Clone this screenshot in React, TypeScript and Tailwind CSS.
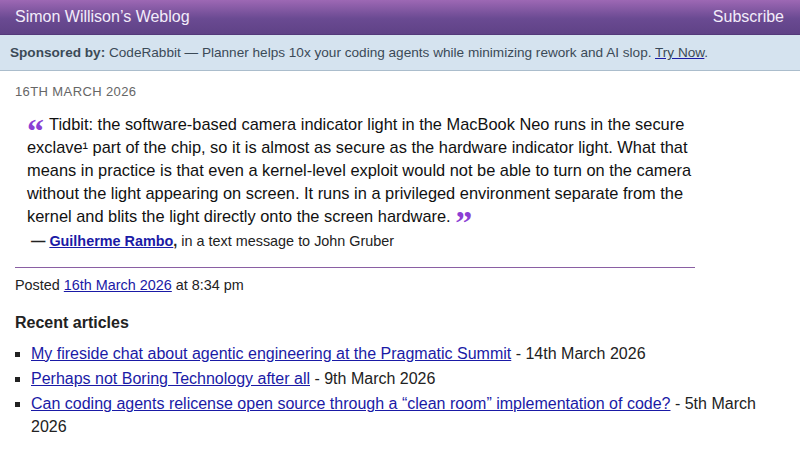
const recent = [
  {
    title: 'My fireside chat about agentic engineering at the Pragmatic Summit',
    date: '14th March 2026',
  },
  { title: 'Perhaps not Boring Technology after all', date: '9th March 2026' },
  {
    title: 'Can coding agents relicense open source through a “clean room” implementation of code?',
    date: '5th March 2026',
  },
]

function Mark({ children, className }: { children: string; className?: string }) {
  return (
    <span
      className={
        "font-['Liberation_Serif','Times_New_Roman',serif] font-bold text-[#8b3fd4] text-[34px] leading-[0] relative top-[12px] " +
        (className ?? '')
      }
    >
      {children}
    </span>
  )
}

export default function App() {
  return (
    <div className="min-h-[450px] bg-white text-[#222] font-['Liberation_Sans',Arial,sans-serif]">
      <header className="h-[35px] flex items-center justify-between px-[15px] bg-[linear-gradient(180deg,#9d68b4_0%,#6a4a92_55%,#5f4286_100%)] border-b border-[#54397a]">
        <span className="text-[16px] text-[#f3ecfa]">Simon Willison’s Weblog</span>
        <span className="text-[16px] text-[#f3ecfa] mr-px">Subscribe</span>
      </header>

      <div className="h-[36px] flex items-center px-[10px] bg-[#d5e3ef] border-b border-[#abbdcc] text-[13.6px] text-[#3b4a57]">
        <p className="pt-[2px]">
          <b>Sponsored by:</b> CodeRabbit — Planner helps 10x your coding agents while minimizing rework and AI
          slop.{' '}
          <a className="underline decoration-[#1a1aa6]">Try Now</a>.
        </p>
      </div>

      <main className="px-[15px] pt-[11px]">
        <div className="text-[13px] leading-[19px] uppercase tracking-[0.03em] text-[#666]">16th March 2026</div>

        <blockquote className="w-[668px] h-[115px] ml-[12px] mt-[12px] text-[16.4px] leading-[23px] text-[#111]">
          <Mark className="mr-[5px]">“</Mark>
          Tidbit: the software-based camera indicator light in the MacBook Neo runs in the secure exclave¹ part of
          the chip, so it is almost as secure as the hardware indicator light. What that means in practice is that
          even a kernel-level exploit would not be able to turn on the camera without the light appearing on screen.
          It runs in a privileged environment separate from the kernel and blits the light directly onto the screen
          hardware. <Mark>”</Mark>
        </blockquote>

        <p className="ml-[16px] mt-[3px] text-[14.4px] leading-[20px]">
          <b>—</b> <a className="font-bold text-[#1a1aa6] underline">Guilherme Rambo</a>
          <b>,</b> in a text message to John Gruber
        </p>

        <div className="w-[680px] h-px mt-[16px] bg-[#8a5fa3]" />

        <p className="mt-[7px] text-[14.4px] leading-[20px]">
          Posted <a className="text-[#1a1aa6] underline">16th March 2026</a> at 8:34 pm
        </p>

        <h3 className="mt-[17px] text-[16px] font-bold leading-[22px]">Recent articles</h3>

        <ul className="mt-[8px] list-[square] pl-[16px] text-[16px] leading-[23px]">
          {recent.map(r => (
            <li key={r.title} className="mb-[2px]">
              <a className="text-[#1a1aa6] underline">{r.title}</a> - {r.date}
            </li>
          ))}
        </ul>
      </main>
    </div>
  )
}
